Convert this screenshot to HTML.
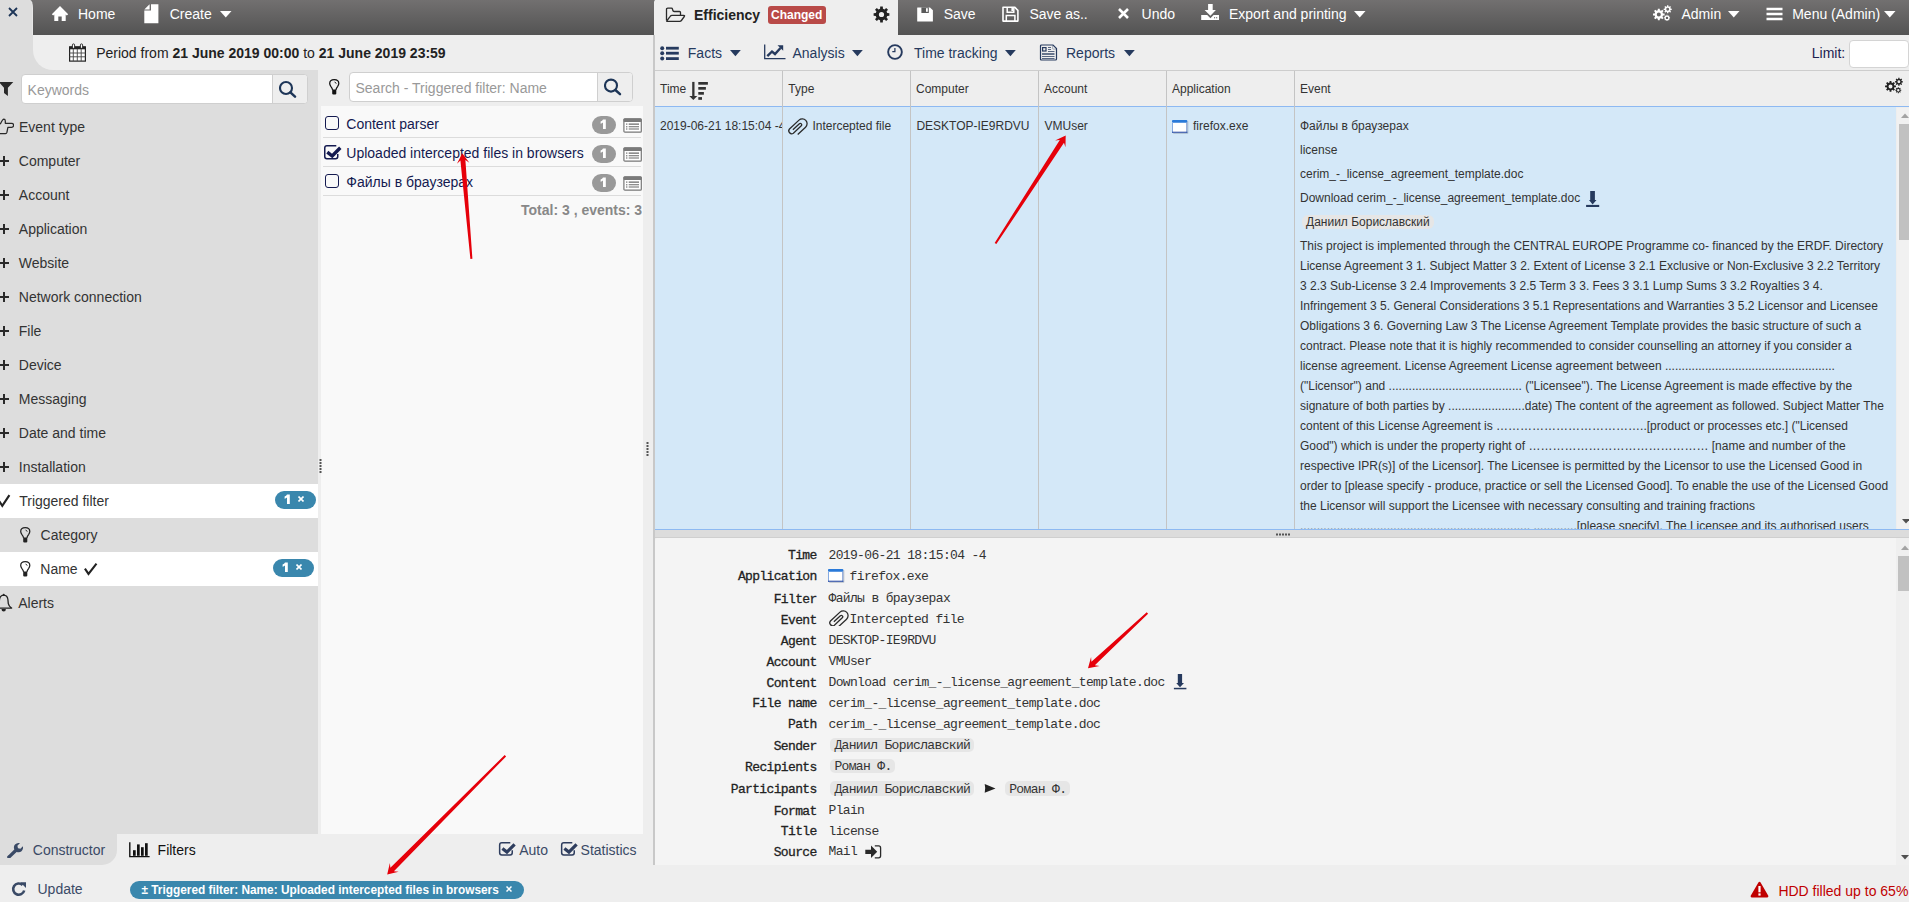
<!DOCTYPE html>
<html><head><meta charset="utf-8">
<style>
*{box-sizing:border-box}
html,body{margin:0;padding:0}
body{width:1909px;height:902px;overflow:hidden;position:relative;background:#eeeeee;font-family:"Liberation Sans",sans-serif;font-size:14px;color:#333}
.abs{position:absolute}
.dark{background:linear-gradient(#727070,#535353)}
.wt{color:#fff;white-space:nowrap}
svg{display:block}
.t{position:absolute;white-space:nowrap;line-height:1}
</style></head><body>

<!-- left gray panel -->
<div class="abs" style="left:0;top:0;width:318px;height:834px;background:#dddddd"></div>
<div class="abs" style="left:0;top:834px;width:117px;height:31px;background:#dddddd;border-bottom-right-radius:15px"></div>

<!-- top dark bar left -->
<div class="abs dark" style="left:29px;top:0;width:626px;height:35px"></div>
<div class="abs" style="left:0;top:0;width:32px;height:35px;background:#dddddd;border-top-right-radius:3px 8px;box-shadow:1px 0 0 #e6e6e6"></div>
<!-- period bar -->
<div class="abs" style="left:33px;top:35px;width:622px;height:35px;background:#eeeeee;border-bottom-left-radius:20px"></div>
<!-- middle area bg -->
<div class="abs" style="left:318px;top:70px;width:337px;height:764px;background:#eeeeee"></div>

<!-- right top dark bar -->
<div class="abs dark" style="left:898px;top:0;width:1011px;height:35px"></div>
<div class="abs" style="left:654px;top:0;width:244px;height:35px;background:#eeeeee;border-top-left-radius:2px"></div>


<!-- close x -->
<svg class="abs" style="left:8.2px;top:7.2px" width="10" height="10" viewBox="0 0 10 10"><path d="M1 1L9 9M9 1L1 9" stroke="#1d3557" stroke-width="1.8" stroke-linecap="butt"/></svg>
<!-- home icon -->
<svg class="abs" style="left:51px;top:5px" width="18" height="17" viewBox="0 0 18 17"><path d="M9 1L0.8 9.2L2.2 10.6L3.3 9.5V16H7.3V11.5H10.7V16H14.7V9.5L15.8 10.6L17.2 9.2Z" fill="#fff"/></svg>
<div class="t wt" style="left:78px;top:7px">Home</div>
<!-- doc icon -->
<svg class="abs" style="left:144px;top:3.5px" width="15" height="20" viewBox="0 0 15 20"><path d="M7 0.25H14.4V19.3H0.3V6.6H7Z" fill="#fff"/><path d="M0.3 5.4L5.6 0.25V5.4Z" fill="#fff"/></svg>
<div class="t wt" style="left:169.7px;top:7px">Create</div>
<svg class="abs" style="left:219.5px;top:10.5px" width="12" height="7" viewBox="0 0 12 7"><path d="M0 0H11.5L5.75 6.5Z" fill="#fff"/></svg>

<!-- calendar -->
<svg class="abs" style="left:69px;top:42.5px" width="17" height="19" viewBox="0 0 17 19"><rect x="0.6" y="3.9" width="15.8" height="14.2" fill="#fff" stroke="#222" stroke-width="1.2"/><rect x="0.5" y="3.5" width="16" height="2.8" fill="#222"/><path d="M4.3 6V18M8.3 6V18M12.2 6V18M0.5 10H16.5M0.5 13.8H16.5" stroke="#444" stroke-width="0.9"/><rect x="3.4" y="0.9" width="2.2" height="4.4" rx="1.1" fill="#fff" stroke="#222" stroke-width="0.9"/><rect x="11.4" y="0.9" width="2.2" height="4.4" rx="1.1" fill="#fff" stroke="#222" stroke-width="0.9"/></svg>
<div class="t" style="left:96.2px;top:46.2px;color:#222">Period from <b>21 June 2019 00:00</b> to <b>21 June 2019 23:59</b></div>

<!-- efficiency tab -->
<svg class="abs" style="left:665px;top:7px" width="21" height="16" viewBox="0 0 21 16"><path d="M1.5 13.6V2.4Q1.5 1.2 2.7 1.2H6.4Q7.3 1.2 7.5 2.1L7.7 3Q8 4.5 9.2 4.5H14.5Q15.5 4.5 15.5 5.5V8.3" fill="none" stroke="#2a2a2a" stroke-width="1.3"/><path d="M1.8 13.9L5.2 9.3Q5.9 8.3 7 8.3H18.7Q20.1 8.3 19.3 9.5L16.4 13.5Q15.8 14.3 14.8 14.3H2.5Q1.3 14.3 1.8 13.9Z" fill="none" stroke="#2a2a2a" stroke-width="1.3" stroke-linejoin="round"/></svg>
<div class="t" style="left:694px;top:8.3px;font-weight:bold;color:#222">Efficiency</div>
<div class="abs" style="left:768px;top:6px;width:58px;height:18px;background:#b94a48;border-radius:3px"></div>
<div class="t" style="left:771px;top:9px;font-size:12px;font-weight:bold;color:#fff">Changed</div>
<!-- gear -->
<svg class="abs" style="left:872.5px;top:5.6px" width="17" height="17" viewBox="0 0 17 17"><path fill-rule="evenodd" fill="#222" d="M14.23 7.08L16.39 7.19L16.39 9.81L14.23 9.92L13.55 11.54L15.01 13.15L13.15 15.01L11.54 13.55L9.92 14.23L9.81 16.39L7.19 16.39L7.08 14.23L5.46 13.55L3.85 15.01L1.99 13.15L3.45 11.54L2.77 9.92L0.61 9.81L0.61 7.19L2.77 7.08L3.45 5.46L1.99 3.85L3.85 1.99L5.46 3.45L7.08 2.77L7.19 0.61L9.81 0.61L9.92 2.77L11.54 3.45L13.15 1.99L15.01 3.85L13.55 5.46ZM11.10 8.50A2.6 2.6 0 1 0 5.90 8.50A2.6 2.6 0 1 0 11.10 8.50Z"/></svg>

<!-- save -->
<svg class="abs" style="left:917px;top:6.5px" width="16" height="15" viewBox="0 0 16 15"><path d="M0.2 0.8Q0.2 0.4 0.6 0.4H13L15.9 3.3V14.2Q15.9 14.6 15.5 14.6H0.6Q0.2 14.6 0.2 14.2Z" fill="#fff"/><rect x="4.4" y="0.4" width="7.4" height="5.6" fill="#5a5a5a"/><rect x="9" y="1.2" width="1.8" height="3.6" fill="#fff"/></svg>
<div class="t wt" style="left:943.7px;top:7px">Save</div>
<svg class="abs" style="left:1002px;top:5.5px" width="17" height="16" viewBox="0 0 17 16"><path d="M1 1.2V15.1H15.9V4.3L12.6 1.2Z" fill="none" stroke="#fff" stroke-width="1.6" stroke-linejoin="round"/><path d="M5.2 1.2V6.3H11.8V1.2" fill="none" stroke="#fff" stroke-width="1.5"/><rect x="9.4" y="1.6" width="1.6" height="3.4" fill="#fff"/><path d="M4.3 15.1V9.6H12.9V15.1" fill="none" stroke="#fff" stroke-width="1.5"/></svg>
<div class="t wt" style="left:1029.4px;top:7px">Save as..</div>
<svg class="abs" style="left:1117.5px;top:8px" width="11" height="11" viewBox="0 0 11 11"><path d="M1 1L10 10M10 1L1 10" stroke="#fff" stroke-width="2.6"/></svg>
<div class="t wt" style="left:1141.6px;top:7px">Undo</div>
<svg class="abs" style="left:1201px;top:3px" width="19" height="19" viewBox="0 0 19 19"><path d="M7.1 1H11.7V6.9H14.9L9.4 12.8L3.6 6.9H7.1Z" fill="#fff"/><path d="M0.2 12H6.2L9.4 15.2L12.6 12H18V16.9H0.2Z" fill="#fff"/><rect x="13" y="14.2" width="1.1" height="1.1" fill="#666"/><rect x="15.1" y="14.2" width="1.1" height="1.1" fill="#666"/></svg>
<div class="t wt" style="left:1229px;top:7px">Export and printing</div>
<svg class="abs" style="left:1353.8px;top:10.5px" width="12" height="7" viewBox="0 0 12 7"><path d="M0 0H11.5L5.75 6.5Z" fill="#fff"/></svg>

<!-- admin gears -->
<svg class="abs" style="left:1652px;top:4px" width="21" height="19" viewBox="0 0 21 19"><path fill-rule="evenodd" fill="#fff" d="M10.97 9.46L12.62 9.53L12.62 11.47L10.97 11.54L10.48 12.72L11.60 13.93L10.23 15.30L9.02 14.18L7.84 14.67L7.77 16.32L5.83 16.32L5.76 14.67L4.58 14.18L3.37 15.30L2.00 13.93L3.12 12.72L2.63 11.54L0.98 11.47L0.98 9.53L2.63 9.46L3.12 8.28L2.00 7.07L3.37 5.70L4.58 6.82L5.76 6.33L5.83 4.68L7.77 4.68L7.84 6.33L9.02 6.82L10.23 5.70L11.60 7.07L10.48 8.28ZM8.80 10.50A2.0 2.0 0 1 0 4.80 10.50A2.0 2.0 0 1 0 8.80 10.50ZM18.61 4.58L19.74 4.63L19.74 5.97L18.61 6.02L18.27 6.85L19.04 7.68L18.08 8.64L17.25 7.87L16.42 8.21L16.37 9.34L15.03 9.34L14.98 8.21L14.15 7.87L13.32 8.64L12.36 7.68L13.13 6.85L12.79 6.02L11.66 5.97L11.66 4.63L12.79 4.58L13.13 3.75L12.36 2.92L13.32 1.96L14.15 2.73L14.98 2.39L15.03 1.26L16.37 1.26L16.42 2.39L17.25 2.73L18.08 1.96L19.04 2.92L18.27 3.75ZM17.15 5.30A1.45 1.45 0 1 0 14.25 5.30A1.45 1.45 0 1 0 17.15 5.30ZM17.23 13.35L18.05 13.36L18.05 14.44L17.23 14.45L16.97 15.09L17.54 15.67L16.77 16.44L16.19 15.87L15.55 16.13L15.54 16.95L14.46 16.95L14.45 16.13L13.81 15.87L13.23 16.44L12.46 15.67L13.03 15.09L12.77 14.45L11.95 14.44L11.95 13.36L12.77 13.35L13.03 12.71L12.46 12.13L13.23 11.36L13.81 11.93L14.45 11.67L14.46 10.85L15.54 10.85L15.55 11.67L16.19 11.93L16.77 11.36L17.54 12.13L16.97 12.71ZM16.20 13.90A1.2 1.2 0 1 0 13.80 13.90A1.2 1.2 0 1 0 16.20 13.90Z"/></svg>
<div class="t wt" style="left:1681.5px;top:7px">Admin</div>
<svg class="abs" style="left:1728.3px;top:10.5px" width="12" height="7" viewBox="0 0 12 7"><path d="M0 0H11.5L5.75 6.5Z" fill="#fff"/></svg>
<svg class="abs" style="left:1765.5px;top:6.5px" width="17" height="14" viewBox="0 0 17 14"><path d="M0.5 2.1H16.5M0.5 7.1H16.5M0.5 12.1H16.5" stroke="#fff" stroke-width="2.5"/></svg>
<div class="t wt" style="left:1792.2px;top:7px">Menu (Admin)</div>
<svg class="abs" style="left:1884.3px;top:10.5px" width="12" height="7" viewBox="0 0 12 7"><path d="M0 0H11.5L5.75 6.5Z" fill="#fff"/></svg>


<!-- funnel -->
<svg class="abs" style="left:-1px;top:82px" width="15" height="15" viewBox="0 0 15 15"><path d="M0 0H14.3L8.9 5.7V14L5 11V5.7Z" fill="#2a2a2a"/></svg>
<div class="abs" style="left:21px;top:74px;width:287px;height:30px;background:#fff;border:1px solid #cfcfcf;border-radius:4px"></div>
<div class="abs" style="left:271.5px;top:75px;width:35px;height:28px;background:#eeeeee;border-left:1px solid #cfcfcf;border-radius:0 3px 3px 0"></div>
<div class="t" style="left:27.6px;top:82.5px;color:#999">Keywords</div>
<svg class="abs" style="left:279px;top:80px" width="18" height="18" viewBox="0 0 18 18"><circle cx="7" cy="8" r="6" fill="none" stroke="#1d3557" stroke-width="2.1"/><path d="M11.4 12.4L16 16.6" stroke="#1d3557" stroke-width="2.5" stroke-linecap="round"/></svg>
<!-- hand -->
<svg class="abs" style="left:-2px;top:118px" width="16" height="17" viewBox="0 0 16 17"><path d="M0 6.2L2.6 5.6Q4.6 1.2 5.9 1.1Q7.2 1.1 7.3 3V5.3H13.6A2 2 0 0 1 13.6 9.3H9.9L8.9 14.4Q8.6 15.5 7.5 15.5H0.5" fill="none" stroke="#2a2a2a" stroke-width="1.25" stroke-linejoin="round"/></svg>
<div class="t" style="left:19px;top:120px;color:#333">Event type</div>
<svg class="abs" style="left:-1px;top:155.5px" width="10" height="10" viewBox="0 0 10 10"><path d="M0 5H10M5 0V10" stroke="#2a2a2a" stroke-width="2"/></svg>
<div class="t" style="left:18.8px;top:154.15px;color:#333">Computer</div>
<svg class="abs" style="left:-1px;top:189.5px" width="10" height="10" viewBox="0 0 10 10"><path d="M0 5H10M5 0V10" stroke="#2a2a2a" stroke-width="2"/></svg>
<div class="t" style="left:18.8px;top:188.15px;color:#333">Account</div>
<svg class="abs" style="left:-1px;top:223.5px" width="10" height="10" viewBox="0 0 10 10"><path d="M0 5H10M5 0V10" stroke="#2a2a2a" stroke-width="2"/></svg>
<div class="t" style="left:18.8px;top:222.15px;color:#333">Application</div>
<svg class="abs" style="left:-1px;top:257.5px" width="10" height="10" viewBox="0 0 10 10"><path d="M0 5H10M5 0V10" stroke="#2a2a2a" stroke-width="2"/></svg>
<div class="t" style="left:18.8px;top:256.15px;color:#333">Website</div>
<svg class="abs" style="left:-1px;top:291.5px" width="10" height="10" viewBox="0 0 10 10"><path d="M0 5H10M5 0V10" stroke="#2a2a2a" stroke-width="2"/></svg>
<div class="t" style="left:18.8px;top:290.15px;color:#333">Network connection</div>
<svg class="abs" style="left:-1px;top:325.5px" width="10" height="10" viewBox="0 0 10 10"><path d="M0 5H10M5 0V10" stroke="#2a2a2a" stroke-width="2"/></svg>
<div class="t" style="left:18.8px;top:324.15px;color:#333">File</div>
<svg class="abs" style="left:-1px;top:359.5px" width="10" height="10" viewBox="0 0 10 10"><path d="M0 5H10M5 0V10" stroke="#2a2a2a" stroke-width="2"/></svg>
<div class="t" style="left:18.8px;top:358.15px;color:#333">Device</div>
<svg class="abs" style="left:-1px;top:393.5px" width="10" height="10" viewBox="0 0 10 10"><path d="M0 5H10M5 0V10" stroke="#2a2a2a" stroke-width="2"/></svg>
<div class="t" style="left:18.8px;top:392.15px;color:#333">Messaging</div>
<svg class="abs" style="left:-1px;top:427.5px" width="10" height="10" viewBox="0 0 10 10"><path d="M0 5H10M5 0V10" stroke="#2a2a2a" stroke-width="2"/></svg>
<div class="t" style="left:18.8px;top:426.15px;color:#333">Date and time</div>
<svg class="abs" style="left:-1px;top:461.5px" width="10" height="10" viewBox="0 0 10 10"><path d="M0 5H10M5 0V10" stroke="#2a2a2a" stroke-width="2"/></svg>
<div class="t" style="left:18.8px;top:460.15px;color:#333">Installation</div>

<div class="abs" style="left:0;top:484px;width:318px;height:34px;background:#fff"></div>
<div class="abs" style="left:0;top:552px;width:318px;height:34px;background:#fff"></div>
<svg class="abs" style="left:-1px;top:493px" width="12" height="15" viewBox="0 0 12 15"><path d="M0.3 8.2L3.3 12.9L10.4 2.1" fill="none" stroke="#222" stroke-width="2.1"/></svg>
<div class="t" style="left:19.2px;top:494.15px;color:#333">Triggered filter</div>
<div class="abs" style="left:275px;top:491px;width:41px;height:18px;background:#3a87ad;border-radius:9px"></div>
<svg class="abs" style="left:283px;top:493px" width="9" height="13" viewBox="0 0 9 13"><path d="M4 1.4H6.8V11H4V4.5Q3 5.3 1.6 5.7V3.6Q3.3 2.9 4 1.4Z" fill="#fff"/></svg>
<svg class="abs" style="left:297.6px;top:496.4px" width="6" height="6" viewBox="0 0 6 6"><path d="M0.5 0.5L5.5 5.5M5.5 0.5L0.5 5.5" stroke="#fff" stroke-width="1.6"/></svg>
<!-- bulb -->
<svg class="abs" style="left:20px;top:527px" width="11" height="16" viewBox="0 0 11 16"><path d="M3.6 10.8Q3.3 9.1 1.8 7.3Q0.7 5.9 0.7 4.6Q0.7 0.7 5.25 0.7Q9.8 0.7 9.8 4.6Q9.8 5.9 8.7 7.3Q7.2 9.1 6.9 10.8" fill="none" stroke="#222" stroke-width="1.25"/><path d="M3.2 10.4H7.3V14.5Q7.3 15.6 6.2 15.6H4.3Q3.2 15.6 3.2 14.5Z" fill="#222"/><path d="M5.6 3.1L7.4 4.4" stroke="#222" stroke-width="1"/></svg>
<div class="t" style="left:40.6px;top:528.15px;color:#333">Category</div>
<svg class="abs" style="left:20px;top:561px" width="11" height="16" viewBox="0 0 11 16"><path d="M3.6 10.8Q3.3 9.1 1.8 7.3Q0.7 5.9 0.7 4.6Q0.7 0.7 5.25 0.7Q9.8 0.7 9.8 4.6Q9.8 5.9 8.7 7.3Q7.2 9.1 6.9 10.8" fill="none" stroke="#222" stroke-width="1.25"/><path d="M3.2 10.4H7.3V14.5Q7.3 15.6 6.2 15.6H4.3Q3.2 15.6 3.2 14.5Z" fill="#222"/><path d="M5.6 3.1L7.4 4.4" stroke="#222" stroke-width="1"/></svg>
<div class="t" style="left:40.3px;top:562.15px;color:#333">Name</div>
<svg class="abs" style="left:84px;top:562px" width="14" height="14" viewBox="0 0 14 14"><path d="M0.9 6.6L4.5 11.9L12.5 1.6" fill="none" stroke="#222" stroke-width="2.1"/></svg>
<div class="abs" style="left:273px;top:559px;width:41px;height:18px;background:#3a87ad;border-radius:9px"></div>
<svg class="abs" style="left:281px;top:561px" width="9" height="13" viewBox="0 0 9 13"><path d="M4 1.4H6.8V11H4V4.5Q3 5.3 1.6 5.7V3.6Q3.3 2.9 4 1.4Z" fill="#fff"/></svg>
<svg class="abs" style="left:295.6px;top:564.4px" width="6" height="6" viewBox="0 0 6 6"><path d="M0.5 0.5L5.5 5.5M5.5 0.5L0.5 5.5" stroke="#fff" stroke-width="1.6"/></svg>
<!-- bell -->
<svg class="abs" style="left:-5px;top:593px" width="18" height="20" viewBox="0 0 18 20"><path d="M8.7 2.2Q12.4 2.4 12.9 6.5L13.3 10.6Q13.7 13 16.6 15.1H0.8Q3.7 13 4.1 10.6L4.5 6.5Q5 2.4 8.7 2.2Z" fill="none" stroke="#222" stroke-width="1.3" stroke-linejoin="round"/><circle cx="8.7" cy="1.7" r="1" fill="#222"/><path d="M6.5 16Q6.5 18.6 8.7 18.6Q10.9 18.6 10.9 16Z" fill="#222"/></svg>
<div class="t" style="left:18.2px;top:596.15px;color:#333">Alerts</div>


<!-- bulb mid -->
<svg class="abs" style="left:328.6px;top:79px" width="11" height="16" viewBox="0 0 11 16"><path d="M3.6 10.8Q3.3 9.1 1.8 7.3Q0.7 5.9 0.7 4.6Q0.7 0.7 5.25 0.7Q9.8 0.7 9.8 4.6Q9.8 5.9 8.7 7.3Q7.2 9.1 6.9 10.8" fill="none" stroke="#111" stroke-width="1.25"/><path d="M3.2 10.4H7.3V14.5Q7.3 15.6 6.2 15.6H4.3Q3.2 15.6 3.2 14.5Z" fill="#111"/><path d="M5.6 3.1L7.4 4.4" stroke="#111" stroke-width="1"/></svg>
<div class="abs" style="left:349px;top:72px;width:284px;height:30px;background:#fff;border:1px solid #cfcfcf;border-radius:4px"></div>
<div class="abs" style="left:597px;top:73px;width:35px;height:28px;background:#eeeeee;border-left:1px solid #cfcfcf;border-radius:0 3px 3px 0"></div>
<div class="t" style="left:355.5px;top:80.5px;color:#999">Search - Triggered filter: Name</div>
<svg class="abs" style="left:604px;top:78px" width="18" height="18" viewBox="0 0 18 18"><circle cx="7" cy="7.6" r="6" fill="none" stroke="#1d3557" stroke-width="2.1"/><path d="M11.4 12L16 16.2" stroke="#1d3557" stroke-width="2.5" stroke-linecap="round"/></svg>
<!-- list panel -->
<div class="abs" style="left:321px;top:106px;width:322px;height:728px;background:#f9f9f9"></div>
<div class="abs" style="left:323px;top:137px;width:318px;height:1px;background:#dcdcdc"></div>
<div class="abs" style="left:323px;top:166px;width:318px;height:1px;background:#dcdcdc"></div>
<div class="abs" style="left:323px;top:195px;width:318px;height:1px;background:#dcdcdc"></div>
<div class="abs" style="left:325px;top:116px;width:14px;height:14px;border:1.5px solid #141a50;border-radius:3px;background:transparent"></div>
<div class="t" style="left:346.3px;top:117.3px;color:#141a50">Content parser</div>
<svg class="abs" style="left:323px;top:144px" width="19" height="17" viewBox="0 0 19 17"><path d="M13.3 1.75H3.9Q1.75 1.75 1.75 3.9V12.6Q1.75 14.75 3.9 14.75H12.6Q14.75 14.75 14.75 12.6V10" fill="none" stroke="#141a50" stroke-width="1.5"/><path d="M4.3 8.2L9.2 12L17.3 3.8" fill="none" stroke="#141a50" stroke-width="3.4"/></svg>
<div class="t" style="left:346.3px;top:146.3px;color:#141a50">Uploaded intercepted files in browsers</div>
<div class="abs" style="left:325px;top:174px;width:14px;height:14px;border:1.5px solid #141a50;border-radius:3px;background:transparent"></div>
<div class="t" style="left:346.3px;top:175.3px;color:#141a50">Файлы в браузерах</div>
<div class="abs" style="left:592px;top:116px;width:24px;height:18px;border-radius:9px;background:#999"></div>
<svg class="abs" style="left:599.2px;top:117.5px" width="9" height="13" viewBox="0 0 9 13"><path d="M4 1.4H6.8V11H4V4.5Q3 5.3 1.6 5.7V3.6Q3.3 2.9 4 1.4Z" fill="#fff"/></svg>
<div class="abs" style="left:592px;top:145px;width:24px;height:18px;border-radius:9px;background:#999"></div>
<svg class="abs" style="left:599.2px;top:146.5px" width="9" height="13" viewBox="0 0 9 13"><path d="M4 1.4H6.8V11H4V4.5Q3 5.3 1.6 5.7V3.6Q3.3 2.9 4 1.4Z" fill="#fff"/></svg>
<div class="abs" style="left:592px;top:174px;width:24px;height:18px;border-radius:9px;background:#999"></div>
<svg class="abs" style="left:599.2px;top:175.5px" width="9" height="13" viewBox="0 0 9 13"><path d="M4 1.4H6.8V11H4V4.5Q3 5.3 1.6 5.7V3.6Q3.3 2.9 4 1.4Z" fill="#fff"/></svg>
<svg class="abs" style="left:622.5px;top:117.5px" width="19" height="15" viewBox="0 0 19 15"><rect x="0.9" y="0.9" width="17.4" height="13.3" rx="1" fill="#fff" stroke="#777" stroke-width="1.2"/><rect x="0.5" y="0.5" width="18.2" height="3.6" rx="1" fill="#7a7a7a"/><g fill="#777"><rect x="3" y="5.5" width="1.4" height="1.2"/><rect x="3" y="8.2" width="1.4" height="1.2"/><rect x="3" y="10.4" width="1.4" height="1.2"/></g><path d="M5.7 6.1H16M5.7 8.8H16M5.7 11H16" stroke="#6a6a6a" stroke-width="1.1"/></svg><svg class="abs" style="left:622.5px;top:146.5px" width="19" height="15" viewBox="0 0 19 15"><rect x="0.9" y="0.9" width="17.4" height="13.3" rx="1" fill="#fff" stroke="#777" stroke-width="1.2"/><rect x="0.5" y="0.5" width="18.2" height="3.6" rx="1" fill="#7a7a7a"/><g fill="#777"><rect x="3" y="5.5" width="1.4" height="1.2"/><rect x="3" y="8.2" width="1.4" height="1.2"/><rect x="3" y="10.4" width="1.4" height="1.2"/></g><path d="M5.7 6.1H16M5.7 8.8H16M5.7 11H16" stroke="#6a6a6a" stroke-width="1.1"/></svg><svg class="abs" style="left:622.5px;top:175.5px" width="19" height="15" viewBox="0 0 19 15"><rect x="0.9" y="0.9" width="17.4" height="13.3" rx="1" fill="#fff" stroke="#777" stroke-width="1.2"/><rect x="0.5" y="0.5" width="18.2" height="3.6" rx="1" fill="#7a7a7a"/><g fill="#777"><rect x="3" y="5.5" width="1.4" height="1.2"/><rect x="3" y="8.2" width="1.4" height="1.2"/><rect x="3" y="10.4" width="1.4" height="1.2"/></g><path d="M5.7 6.1H16M5.7 8.8H16M5.7 11H16" stroke="#6a6a6a" stroke-width="1.1"/></svg>
<div class="t" style="left:521px;top:203px;color:#888;font-weight:bold">Total: 3 , events: 3</div>
<!-- middle right strip & separator -->
<div class="abs" style="left:653px;top:35px;width:2px;height:830px;background:#c8c8c8"></div>


<!-- toolbar row 2 -->
<svg class="abs" style="left:659.5px;top:45.5px" width="19" height="15" viewBox="0 0 19 15"><g fill="#263a5e"><circle cx="2.2" cy="2.2" r="2"/><circle cx="2.2" cy="7.2" r="2"/><circle cx="2.2" cy="12.5" r="2"/><rect x="6" y="0.8" width="12.8" height="2.8"/><rect x="6" y="5.8" width="12.8" height="2.8"/><rect x="6" y="11.2" width="12.8" height="2.8"/></g></svg>
<div class="t" style="left:687.8px;top:45.6px;color:#263a5e">Facts</div>
<svg class="abs" style="left:729.7px;top:50px" width="11" height="7" viewBox="0 0 11 7"><path d="M0 0H10.8L5.4 6.3Z" fill="#263a5e"/></svg>
<svg class="abs" style="left:763.5px;top:44.2px" width="22" height="16" viewBox="0 0 22 16"><path d="M0.7 0.4V14.6H21.5" fill="none" stroke="#263a5e" stroke-width="1.3"/><path d="M3.3 12.2L8 7.5L11 10L16.5 4" fill="none" stroke="#263a5e" stroke-width="2.4"/><path d="M13.5 1.2H19.2V6.8Z" fill="#263a5e"/></svg>
<div class="t" style="left:792.5px;top:45.6px;color:#263a5e">Analysis</div>
<svg class="abs" style="left:851.7px;top:50px" width="11" height="7" viewBox="0 0 11 7"><path d="M0 0H10.8L5.4 6.3Z" fill="#263a5e"/></svg>
<svg class="abs" style="left:887px;top:44.3px" width="16" height="16" viewBox="0 0 16 16"><circle cx="8" cy="8" r="6.85" fill="none" stroke="#263a5e" stroke-width="1.9"/><path d="M7.9 4.1V7.6H5.3" fill="none" stroke="#263a5e" stroke-width="1.25"/></svg>
<div class="t" style="left:914px;top:45.6px;color:#263a5e">Time tracking</div>
<svg class="abs" style="left:1004.8px;top:50px" width="11" height="7" viewBox="0 0 11 7"><path d="M0 0H10.8L5.4 6.3Z" fill="#263a5e"/></svg>
<svg class="abs" style="left:1039px;top:44px" width="19" height="18" viewBox="0 0 19 18"><path d="M1.5 2Q1.5 1 2.5 1H14L17.5 4.5V15Q17.5 16 16.5 16H2.5Q1.5 16 1.5 15Z" fill="none" stroke="#263a5e" stroke-width="1.2"/><path d="M13.6 1.4V4.4Q13.6 5.1 14.3 5.1H17.2" fill="none" stroke="#263a5e" stroke-width="0.7" opacity="0.5"/><rect x="3.6" y="3.6" width="3.4" height="3.4" fill="none" stroke="#263a5e" stroke-width="1.2"/><path d="M9 3.5H12M9 5.5H12M9 7.5H15.5M3 12.5H15.5M3 14.5H15.5" stroke="#263a5e" stroke-width="1" opacity="0.75"/><path d="M3 10H15.5" stroke="#263a5e" stroke-width="1.8" opacity="0.75"/></svg>
<div class="t" style="left:1066px;top:45.6px;color:#263a5e">Reports</div>
<svg class="abs" style="left:1123.6px;top:50px" width="11" height="7" viewBox="0 0 11 7"><path d="M0 0H10.8L5.4 6.3Z" fill="#263a5e"/></svg>
<div class="t" style="left:1811.8px;top:45.7px;color:#1c2250">Limit:</div>
<div class="abs" style="left:1849px;top:40px;width:60px;height:28px;background:#fff;border:1px solid #d4d4d4;border-radius:4px"></div>

<!-- table -->
<div class="abs" style="left:655px;top:70px;width:1254px;height:37px;background:#eeeeee;border-top:1px solid #cdcdcd;border-bottom:1px solid #8db9f2"></div>
<div class="abs" style="left:655px;top:107px;width:1241px;height:423px;background:#d4e8f8"></div>
<div class="abs" style="left:655px;top:529px;width:1254px;height:1px;background:#8db9f2"></div>
<div class="abs" style="left:782px;top:71px;width:1px;height:458px;background:#c4c4c4"></div>
<div class="abs" style="left:910px;top:71px;width:1px;height:458px;background:#c4c4c4"></div>
<div class="abs" style="left:1038px;top:71px;width:1px;height:458px;background:#c4c4c4"></div>
<div class="abs" style="left:1166px;top:71px;width:1px;height:458px;background:#c4c4c4"></div>
<div class="abs" style="left:1294px;top:71px;width:1px;height:458px;background:#c4c4c4"></div>
<div class="t" style="left:660.0px;top:82.8px;font-size:12px;color:#333">Time</div>
<div class="t" style="left:788.3px;top:82.8px;font-size:12px;color:#333">Type</div>
<div class="t" style="left:916.0px;top:82.8px;font-size:12px;color:#333">Computer</div>
<div class="t" style="left:1044.0px;top:82.8px;font-size:12px;color:#333">Account</div>
<div class="t" style="left:1172.0px;top:82.8px;font-size:12px;color:#333">Application</div>
<div class="t" style="left:1300.0px;top:82.8px;font-size:12px;color:#333">Event</div>

<!-- sort icon -->
<svg class="abs" style="left:689px;top:81px" width="20" height="20" viewBox="0 0 20 20"><rect x="3.2" y="0.9" width="2.3" height="14.5" fill="#333"/><path d="M0.3 14.9H8.3L4.3 18.9Z" fill="#333"/><rect x="9.3" y="1" width="9.6" height="2.7" fill="#333"/><rect x="9.3" y="6" width="7.6" height="2.7" fill="#333"/><rect x="9.3" y="11" width="5.6" height="2.7" fill="#333"/><rect x="9.3" y="16.1" width="3.7" height="2.7" fill="#333"/></svg>
<!-- gears header -->
<svg class="abs" style="left:1884px;top:76px" width="20" height="19" viewBox="0 0 20 19"><path fill-rule="evenodd" fill="#222" d="M10.38 9.44L11.93 9.50L11.93 11.30L10.38 11.36L9.93 12.46L10.97 13.60L9.70 14.87L8.56 13.83L7.46 14.28L7.40 15.83L5.60 15.83L5.54 14.28L4.44 13.83L3.30 14.87L2.03 13.60L3.07 12.46L2.62 11.36L1.07 11.30L1.07 9.50L2.62 9.44L3.07 8.34L2.03 7.20L3.30 5.93L4.44 6.97L5.54 6.52L5.60 4.97L7.40 4.97L7.46 6.52L8.56 6.97L9.70 5.93L10.97 7.20L9.93 8.34ZM8.50 10.40A2.0 2.0 0 1 0 4.50 10.40A2.0 2.0 0 1 0 8.50 10.40ZM17.71 5.10L18.85 5.14L18.85 6.46L17.71 6.50L17.38 7.30L18.15 8.13L17.23 9.05L16.40 8.28L15.60 8.61L15.56 9.75L14.24 9.75L14.20 8.61L13.40 8.28L12.57 9.05L11.65 8.13L12.42 7.30L12.09 6.50L10.95 6.46L10.95 5.14L12.09 5.10L12.42 4.30L11.65 3.47L12.57 2.55L13.40 3.32L14.20 2.99L14.24 1.85L15.56 1.85L15.60 2.99L16.40 3.32L17.23 2.55L18.15 3.47L17.38 4.30ZM16.35 5.80A1.45 1.45 0 1 0 13.45 5.80A1.45 1.45 0 1 0 16.35 5.80ZM16.44 13.67L17.25 13.67L17.25 14.73L16.44 14.73L16.18 15.33L16.76 15.92L16.02 16.66L15.43 16.08L14.83 16.34L14.83 17.15L13.77 17.15L13.77 16.34L13.17 16.08L12.58 16.66L11.84 15.92L12.42 15.33L12.16 14.73L11.35 14.73L11.35 13.67L12.16 13.67L12.42 13.07L11.84 12.48L12.58 11.74L13.17 12.32L13.77 12.06L13.77 11.25L14.83 11.25L14.83 12.06L15.43 12.32L16.02 11.74L16.76 12.48L16.18 13.07ZM15.50 14.20A1.2 1.2 0 1 0 13.10 14.20A1.2 1.2 0 1 0 15.50 14.20Z"/></svg>


<!-- row content -->
<div class="abs" style="left:655px;top:107px;width:127px;height:422px;overflow:hidden"><div class="t" style="left:5px;top:13px;font-size:12px;color:#333">2019-06-21 18:15:04 -4</div></div>
<svg class="abs" style="left:784px;top:114px" width="28" height="26" viewBox="0 0 28 26"><path d="M-3.9 24.35L6.8 24.35A4.8 4.8 0 0 0 6.8 14.7L-6.2 14.7A2.9 2.9 0 0 0 -6.2 20.45L4.6 20.45A1.4 1.4 0 0 0 4.6 17.65L-4.3 17.65" fill="none" stroke="#2a2a2a" stroke-width="1.3" stroke-linecap="butt" transform="matrix(0.732,-0.681,0.681,0.732,0,0)"/></svg>
<div class="t" style="left:812.4px;top:120px;font-size:12px;color:#333">Intercepted file</div>
<div class="t" style="left:916.4px;top:120px;font-size:12px;color:#333">DESKTOP-IE9RDVU</div>
<div class="t" style="left:1044.5px;top:120px;font-size:12px;color:#333">VMUser</div>
<svg class="abs" style="left:1172px;top:120.2px" width="17" height="15" viewBox="0 0 17 15"><rect x="1" y="1" width="15.3" height="12.8" rx="0.8" fill="#6f7f90" opacity="0.45"/><rect x="0" y="0" width="15.3" height="12.8" rx="0.8" fill="#fff"/><rect x="0" y="0" width="15.3" height="2.7" rx="0.8" fill="#2a7ad9"/><rect x="0" y="2.5" width="1" height="10.3" fill="#86aae0"/><rect x="14.3" y="2.5" width="1" height="10.3" fill="#6d8fcc"/><rect x="0" y="11.7" width="15.3" height="1.1" fill="#2c4ea5"/></svg>
<div class="t" style="left:1193px;top:120px;font-size:12px;color:#333">firefox.exe</div>
<div class="t" style="left:1300px;top:119.8px;font-size:12px;color:#333">Файлы в браузерах</div>
<div class="t" style="left:1300px;top:143.8px;font-size:12px;color:#333">license</div>
<div class="t" style="left:1300px;top:167.8px;font-size:12px;color:#333">cerim_-_license_agreement_template.doc</div>
<div class="t" style="left:1300px;top:191.8px;font-size:12px;color:#333">Download cerim_-_license_agreement_template.doc</div>
<svg class="abs" style="left:1586px;top:190px" width="14" height="18" viewBox="0 0 14 18"><path d="M4.2 1H8.9V10.1H10.5L6.6 14.4L3 10.1H4.2Z" fill="#263a5e"/><rect x="0.1" y="14.9" width="13.1" height="2.1" fill="#263a5e"/></svg>
<div class="abs" style="left:1302px;top:214.5px;width:132px;height:14px;background:#e6e6e6;border-radius:6px"></div>
<div class="t" style="left:1306px;top:215.8px;font-size:12px;color:#333">Даниил Бориславский</div>
<div class="abs" style="left:1294px;top:107px;width:602px;height:422px;overflow:hidden">
<div class="t" style="left:6px;top:132.84px;font-size:12px;color:#333">This project is implemented through the CENTRAL EUROPE Programme co- financed by the ERDF. Directory</div>
<div class="t" style="left:6px;top:152.84px;font-size:12px;color:#333">License Agreement 3 1. Subject Matter 3 2. Extent of License 3 2.1 Exclusive or Non-Exclusive 3 2.2 Territory</div>
<div class="t" style="left:6px;top:172.84px;font-size:12px;color:#333">3 2.3 Sub-License 3 2.4 Improvements 3 2.5 Term 3 3. Fees 3 3.1 Lump Sums 3 3.2 Royalties 3 4.</div>
<div class="t" style="left:6px;top:192.84px;font-size:12px;color:#333">Infringement 3 5. General Considerations 3 5.1 Representations and Warranties 3 5.2 Licensor and Licensee</div>
<div class="t" style="left:6px;top:212.84px;font-size:12px;color:#333">Obligations 3 6. Governing Law 3 The License Agreement Template provides the basic structure of such a</div>
<div class="t" style="left:6px;top:232.84px;font-size:12px;color:#333">contract. Please note that it is highly recommended to consider counselling an attorney if you consider a</div>
<div class="t" style="left:6px;top:252.84px;font-size:12px;color:#333">license agreement. License Agreement License agreement between ...................................................</div>
<div class="t" style="left:6px;top:272.84px;font-size:12px;color:#333">(&quot;Licensor&quot;) and ........................................ (&quot;Licensee&quot;). The License Agreement is made effective by the</div>
<div class="t" style="left:6px;top:292.84px;font-size:12px;color:#333">signature of both parties by .......................date) The content of the agreement as followed. Subject Matter The</div>
<div class="t" style="left:6px;top:312.84px;font-size:12px;color:#333">content of this License Agreement is ………………………………..[product or processes etc.] (&quot;Licensed</div>
<div class="t" style="left:6px;top:332.84px;font-size:12px;color:#333">Good&quot;) which is under the property right of ……………………………………… [name and number of the</div>
<div class="t" style="left:6px;top:352.84px;font-size:12px;color:#333">respective IPR(s)] of the Licensor]. The Licensee is permitted by the Licensor to use the Licensed Good in</div>
<div class="t" style="left:6px;top:372.84px;font-size:12px;color:#333">order to [please specify - produce, practice or sell the Licensed Good]. To enable the use of the Licensed Good</div>
<div class="t" style="left:6px;top:392.84px;font-size:12px;color:#333">the Licensor will support the Licensee with necessary consulting and training fractions</div>
<div class="t" style="left:6px;top:412.84px;font-size:12px;color:#333">..................................................................... .............[please specify]. The Licensee and its authorised users</div>
</div>

<!-- table scrollbar -->
<div class="abs" style="left:1897px;top:108px;width:12px;height:421px;background:#f1f1f1"></div>
<div class="abs" style="left:1899px;top:124px;width:10px;height:115.5px;background:#c1c1c1"></div>
<svg class="abs" style="left:1901px;top:113px" width="8" height="5" viewBox="0 0 8 5"><path d="M0 5H8L4 0.5Z" fill="#a3a3a3"/></svg>
<svg class="abs" style="left:1901.5px;top:519px" width="8" height="5" viewBox="0 0 8 5"><path d="M0 0H8L4 4.5Z" fill="#505050"/></svg>
<!-- splitter -->
<div class="abs" style="left:655px;top:530px;width:1254px;height:8px;background:#dcdcdc;border-bottom:1px solid #cfcfcf"></div>
<svg class="abs" style="left:1276px;top:532.5px" width="15" height="3" viewBox="0 0 15 3"><g fill="#555"><rect x="0" y="0.5" width="2" height="2"/><rect x="3" y="0.5" width="2" height="2"/><rect x="6" y="0.5" width="2" height="2"/><rect x="9" y="0.5" width="2" height="2"/><rect x="12" y="0.5" width="2" height="2"/></g></svg>
<!-- details -->
<div class="abs" style="left:655px;top:538px;width:1254px;height:327px;background:#f4f4f4;border-top-left-radius:3px"></div>
<div class="abs" style="left:1896px;top:538px;width:13px;height:327px;background:#efefef"></div>
<div class="abs" style="left:1898px;top:555.5px;width:11px;height:35.5px;background:#c1c1c1"></div>
<svg class="abs" style="left:1901px;top:545px" width="8" height="5" viewBox="0 0 8 5"><path d="M0 5H8L4 0.5Z" fill="#a3a3a3"/></svg>
<svg class="abs" style="left:1901px;top:854.5px" width="8" height="5" viewBox="0 0 8 5"><path d="M0 0H8L4 4.5Z" fill="#505050"/></svg>
<!-- split left strip -->
<div class="abs" style="left:643px;top:35px;width:10px;height:799px;background:#eeeeee"></div>
<svg class="abs" style="left:646px;top:442px" width="3" height="15" viewBox="0 0 3 15"><g fill="#555"><rect x="0.5" y="0" width="2" height="2"/><rect x="0.5" y="3" width="2" height="2"/><rect x="0.5" y="6" width="2" height="2"/><rect x="0.5" y="9" width="2" height="2"/><rect x="0.5" y="12" width="2" height="2"/></g></svg>
<svg class="abs" style="left:319px;top:459px" width="3" height="15" viewBox="0 0 3 15"><g fill="#555"><rect x="0.5" y="0" width="2" height="2"/><rect x="0.5" y="3" width="2" height="2"/><rect x="0.5" y="6" width="2" height="2"/><rect x="0.5" y="9" width="2" height="2"/><rect x="0.5" y="12" width="2" height="2"/></g></svg>

<style>.m{position:absolute;white-space:nowrap;line-height:1;font-family:"Liberation Mono",monospace;font-size:13px;letter-spacing:-0.65px;color:#333} .ml{font-weight:normal;-webkit-text-stroke:0.3px #222;color:#222;text-align:right;width:200px}</style>
<div class="m ml" style="left:616.6px;top:549.23px">Time</div>
<div class="m ml" style="left:616.6px;top:570.43px">Application</div>
<div class="m ml" style="left:616.6px;top:592.73px">Filter</div>
<div class="m ml" style="left:616.6px;top:613.73px">Event</div>
<div class="m ml" style="left:616.6px;top:635.03px">Agent</div>
<div class="m ml" style="left:616.6px;top:655.73px">Account</div>
<div class="m ml" style="left:616.6px;top:676.73px">Content</div>
<div class="m ml" style="left:616.6px;top:697.33px">File name</div>
<div class="m ml" style="left:616.6px;top:718.43px">Path</div>
<div class="m ml" style="left:616.6px;top:739.93px">Sender</div>
<div class="m ml" style="left:616.6px;top:760.93px">Recipients</div>
<div class="m ml" style="left:616.6px;top:782.6px">Participants</div>
<div class="m ml" style="left:616.6px;top:804.53px">Format</div>
<div class="m ml" style="left:616.6px;top:825.23px">Title</div>
<div class="m ml" style="left:616.6px;top:846.13px">Source</div>
<div class="m" style="left:828.5px;top:548.53px">2019-06-21 18:15:04 -4</div>
<div class="m" style="left:849.6px;top:569.73px">firefox.exe</div>
<div class="m" style="left:828.5px;top:592.03px">Файлы в браузерах</div>
<div class="m" style="left:849.6px;top:613.03px">Intercepted file</div>
<div class="m" style="left:828.5px;top:634.33px">DESKTOP-IE9RDVU</div>
<div class="m" style="left:828.5px;top:655.03px">VMUser</div>
<div class="m" style="left:828.5px;top:676.03px">Download cerim_-_license_agreement_template.doc</div>
<div class="m" style="left:828.5px;top:696.63px">cerim_-_license_agreement_template.doc</div>
<div class="m" style="left:828.5px;top:717.73px">cerim_-_license_agreement_template.doc</div>
<div class="m" style="left:828.5px;top:803.83px">Plain</div>
<div class="m" style="left:828.5px;top:824.53px">license</div>
<div class="m" style="left:828.5px;top:845.43px">Mail</div>
<div class="abs" style="left:830.2px;top:737.5px;width:143.5px;height:14.5px;background:#e6e6e6;border-radius:5px"></div><div class="m" style="left:834.4px;top:739.23px">Даниил Бориславский</div>
<div class="abs" style="left:830.2px;top:758.5px;width:64.5px;height:14.5px;background:#e6e6e6;border-radius:5px"></div><div class="m" style="left:834.4px;top:760.23px">Роман Ф.</div>
<div class="abs" style="left:830.2px;top:781px;width:143.5px;height:14.5px;background:#e6e6e6;border-radius:5px"></div><div class="m" style="left:834.4px;top:782.6px">Даниил Бориславский</div>
<div class="abs" style="left:1005px;top:781px;width:64.5px;height:14.5px;background:#e6e6e6;border-radius:5px"></div><div class="m" style="left:1009.2px;top:782.6px">Роман Ф.</div>

<svg class="abs" style="left:828px;top:569.3px" width="17" height="15" viewBox="0 0 17 15"><rect x="1" y="1" width="15.3" height="12.8" rx="0.8" fill="#6f7f90" opacity="0.45"/><rect x="0" y="0" width="15.3" height="12.8" rx="0.8" fill="#fff"/><rect x="0" y="0" width="15.3" height="2.7" rx="0.8" fill="#2a7ad9"/><rect x="0" y="2.5" width="1" height="10.3" fill="#86aae0"/><rect x="14.3" y="2.5" width="1" height="10.3" fill="#6d8fcc"/><rect x="0" y="11.7" width="15.3" height="1.1" fill="#2c4ea5"/></svg>
<svg class="abs" style="left:824.5px;top:605.8px" width="28" height="20.4" viewBox="0 0 28 20.4"><path d="M-3.9 24.35L6.8 24.35A4.8 4.8 0 0 0 6.8 14.7L-6.2 14.7A2.9 2.9 0 0 0 -6.2 20.45L4.6 20.45A1.4 1.4 0 0 0 4.6 17.65L-4.3 17.65" fill="none" stroke="#2a2a2a" stroke-width="1.3" stroke-linecap="butt" transform="matrix(0.732,-0.681,0.681,0.732,0,0)"/></svg>
<svg class="abs" style="left:1173px;top:673px" width="14" height="17" viewBox="0 0 14 17"><path d="M4.8 1H9.1V10H11L7 14.3L3.2 10H4.8Z" fill="#263a5e"/><rect x="0.9" y="14.8" width="12.5" height="1.5" fill="#263a5e"/></svg>
<svg class="abs" style="left:983.5px;top:783px" width="12" height="11" viewBox="0 0 12 11"><path d="M0.7 1L11.5 5.4L0.7 9.8Q1.8 5.4 0.7 1Z" fill="#222"/></svg>
<svg class="abs" style="left:865px;top:844.5px" width="17" height="14" viewBox="0 0 17 14"><path d="M0.3 4.8H6V0.6L12.2 6.8L6 13.1V9H0.3Z" fill="#2a2a2a"/><path d="M9.8 0.9H13.6Q15.6 0.9 15.6 2.9V10.8Q15.6 12.8 13.6 12.8H9.8" fill="none" stroke="#2a2a2a" stroke-width="1.3"/></svg>


<!-- bottom tabs -->
<svg class="abs" style="left:6px;top:841px" width="17" height="17" viewBox="0 0 17 17"><path d="M1.5 15.2L8.3 8.4Q7.2 5.4 9 3.4Q11 1.3 14 2.1L11.4 4.8L12 7.2L14.4 7.8L16.9 5.2Q17.5 8.3 15.5 10.2Q13.5 12 10.6 10.9L3.8 17.5" fill="#3a4a66"/><circle cx="2.6" cy="16" r="1.5" fill="#3a4a66"/></svg>
<div class="t" style="left:32.8px;top:843px;color:#3a4a66">Constructor</div>
<svg class="abs" style="left:129px;top:840.8px" width="22" height="17" viewBox="0 0 22 17"><path d="M0.8 1.3V15.6H20.6" fill="none" stroke="#111" stroke-width="1.4"/><rect x="4" y="9.2" width="2.7" height="5.6" fill="#111"/><rect x="8" y="3.4" width="2.7" height="11.4" fill="#111"/><rect x="12" y="6.2" width="2.7" height="8.6" fill="#111"/><rect x="16" y="2.2" width="2.7" height="12.6" fill="#111"/></svg>
<div class="t" style="left:157.6px;top:843px;color:#111">Filters</div>
<!-- checkboxes auto/statistics -->
<svg class="abs" style="left:498px;top:841px" width="18" height="17" viewBox="0 0 18 17"><path d="M12.3 1.75H3.8Q1.65 1.75 1.65 3.9V11.8Q1.65 13.95 3.8 13.95H12.1Q14.25 13.95 14.25 11.8V9.2" fill="none" stroke="#2e3d5e" stroke-width="1.5"/><path d="M4.4 7.6L8.9 11.1L16.6 3.3" fill="none" stroke="#2e3d5e" stroke-width="3.2" stroke-linejoin="miter"/></svg>
<div class="t" style="left:519.2px;top:843px;color:#3a4a66">Auto</div>
<svg class="abs" style="left:560px;top:841px" width="18" height="17" viewBox="0 0 18 17"><path d="M12.3 1.75H3.8Q1.65 1.75 1.65 3.9V11.8Q1.65 13.95 3.8 13.95H12.1Q14.25 13.95 14.25 11.8V9.2" fill="none" stroke="#2e3d5e" stroke-width="1.5"/><path d="M4.4 7.6L8.9 11.1L16.6 3.3" fill="none" stroke="#2e3d5e" stroke-width="3.2" stroke-linejoin="miter"/></svg>
<div class="t" style="left:580.6px;top:843px;color:#3a4a66">Statistics</div>
<!-- status bar -->
<svg class="abs" style="left:11px;top:880.5px" width="16" height="16" viewBox="0 0 16 16"><path d="M13.2 9.5A5.6 5.6 0 1 1 11.6 4" fill="none" stroke="#3a4a66" stroke-width="2.6"/><path d="M9.2 1.3H15V7.1Z" fill="#3a4a66"/></svg>
<div class="t" style="left:37.5px;top:881.7px;color:#3a4a66">Update</div>
<div class="abs" style="left:130px;top:881px;width:394px;height:18px;background:#3a87ad;border-radius:9px"></div>
<div class="t" style="left:141.5px;top:884.9px;color:#fff;font-size:11.85px;font-weight:bold">± Triggered filter: Name: Uploaded intercepted files in browsers</div>
<svg class="abs" style="left:505.8px;top:886px" width="6" height="6" viewBox="0 0 6 6"><path d="M0.5 0.5L5.5 5.5M5.5 0.5L0.5 5.5" stroke="#fff" stroke-width="1.5"/></svg>
<svg class="abs" style="left:1749.5px;top:881px" width="19" height="17" viewBox="0 0 19 17"><path d="M9.5 0.8Q10.2 0.8 10.6 1.5L18.3 14.8Q18.8 16.2 17.4 16.4H1.6Q0.2 16.2 0.7 14.8L8.4 1.5Q8.8 0.8 9.5 0.8Z" fill="#c00000"/><rect x="8.4" y="5" width="2.2" height="6.3" fill="#fff"/><rect x="8.4" y="12.4" width="2.2" height="2.2" fill="#fff"/></svg>
<div class="t" style="left:1778.4px;top:884.4px;color:#c00000">HDD filled up to 65%</div>

<!-- red arrows (annotations) -->
<svg class="abs" style="left:0;top:0;pointer-events:none" width="1909" height="902" viewBox="0 0 1909 902"><g fill="#e6000a"><path d="M472.40 258.81L465.39 160.06L469.34 162.73L462.30 153.30L456.98 163.80L460.41 160.49L470.40 258.99Z"/><path d="M996.34 244.05L1063.98 142.83L1065.44 147.36L1065.70 135.60L1055.05 140.60L1059.79 140.10L994.66 242.95Z"/><path d="M1146.72 612.17L1091.41 661.70L1091.08 656.95L1088.00 668.30L1099.54 666.01L1094.82 665.35L1148.08 613.63Z"/><path d="M504.69 754.99L390.37 867.68L389.86 862.94L387.20 874.40L398.65 871.69L393.91 871.20L506.11 756.41Z"/></g></svg>

</body></html>
